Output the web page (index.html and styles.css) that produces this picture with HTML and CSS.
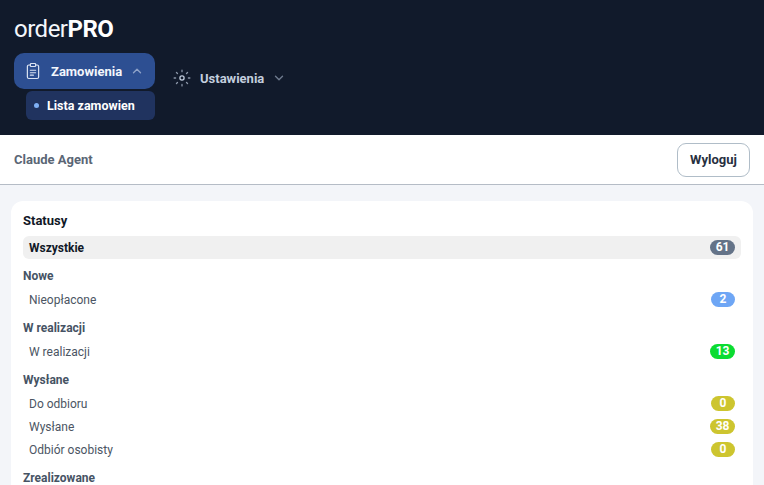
FILE: index.html
```html
<!DOCTYPE html>
<html lang="pl">
<head>
<meta charset="utf-8">
<title>orderPRO</title>
<link rel="stylesheet" href="styles.css">
</head>
<body>
<header class="sidebar">
  <div class="logo">order<strong>PRO</strong></div>
  <nav class="nav">
    <div class="nav-group">
      <a class="nav-item active">
        <svg class="icon" viewBox="0 0 24 24" fill="none" stroke="currentColor" stroke-width="1.600" stroke-linecap="round" stroke-linejoin="round"><path d="M8.500 4H6.500A2 2 0 0 0 4.500 6v14a2 2 0 0 0 2 2h11a2 2 0 0 0 2-2V6a2 2 0 0 0-2-2h-2"/><rect x="8.500" y="2" width="7" height="4" rx="1"/><path d="M8.500 11h7M8.500 14.300h7M8.500 17.600h4"/></svg>
        <span class="nav-label">Zamowienia</span>
        <svg class="chev" viewBox="0 0 12 12" fill="none" stroke="currentColor" stroke-width="1.400" stroke-linecap="round" stroke-linejoin="round"><path d="M2.500 7.800L6 4.300l3.500 3.500"/></svg>
      </a>
      <a class="sub-item"><span class="dot"></span>Lista zamowien</a>
    </div>
    <a class="nav-item plain">
      <svg class="icon" viewBox="0 0 24 24" fill="none" stroke="currentColor" stroke-linecap="round"><circle class="gear-ring" cx="12" cy="12" r="2.800" stroke-width="1.700"/><path class="gear-rays" stroke-width="1.700" d="M12 1.500v2M12 20.500v2M1.500 12h2M20.500 12h2M4.600 4.600l1.400 1.400M18 18l1.400 1.400M4.600 19.400L6 18M18 6l1.400-1.400"/></svg>
      <span class="nav-label">Ustawienia</span>
      <svg class="chev" viewBox="0 0 12 12" fill="none" stroke="currentColor" stroke-width="1.400" stroke-linecap="round" stroke-linejoin="round"><path d="M2.500 4.300L6 7.800l3.500-3.500"/></svg>
    </a>
  </nav>
</header>
<div class="topbar">
  <span class="user">Claude Agent</span>
  <button class="logout">Wyloguj</button>
</div>
<main class="content">
  <section class="card">
    <h2 class="card-title">Statusy</h2>
    <div class="row all"><span>Wszystkie</span><span class="badge slate">61</span></div>
    <h3 class="group">Nowe</h3>
    <div class="row"><span>Nieopłacone</span><span class="badge blue">2</span></div>
    <h3 class="group">W realizacji</h3>
    <div class="row"><span>W realizacji</span><span class="badge green">13</span></div>
    <h3 class="group">Wysłane</h3>
    <div class="row"><span>Do odbioru</span><span class="badge olive">0</span></div>
    <div class="row"><span>Wysłane</span><span class="badge olive">38</span></div>
    <div class="row"><span>Odbiór osobisty</span><span class="badge olive">0</span></div>
    <h3 class="group">Zrealizowane</h3>
  </section>
</main>
</body>
</html>
```
FILE: styles.css
```css
* { box-sizing: border-box; }
html, body { margin: 0; padding: 0; height: 485px; overflow: hidden; }
body { background: #f3f5f9; font-family: Roboto, "Liberation Sans", sans-serif; color: #111827; }

.sidebar { background: #111a2b; height: 135px; padding: 14px 14px 0; }
.logo { font-size: 24px; line-height: 30px; color: #f4f7fb; letter-spacing: -0.5px; }
.logo strong { font-weight: 700; color: #fff; }

.nav { display: flex; align-items: flex-start; margin-top: 9px; }
.nav-group { width: 141px; display: flex; flex-direction: column; gap: 2px; }
.nav-item { display: flex; align-items: center; font-size: 13px; font-weight: 700; height: 36px; }
.nav-item.active { background: #2d4f92; color: #f3f6fc; border-radius: 10px; padding: 0 12px 0 10px; }
.nav-item.plain { color: #c3cede; margin: 7px 0 0 14px; padding: 0 4px; }
.icon { width: 18px; height: 18px; flex: none; }
.active .icon { color: #dbe3f2; }
.gear-rays { stroke: #8b96a8; }
.gear-ring { stroke: #c3cede; }
.nav-label { margin-left: 9px; }
.chev { width: 12px; height: 12px; margin-left: 9px; flex: none; }
.active .chev { color: #8ea2c8; }
.plain .chev { color: #6f7b8e; }
.sub-item { display: flex; align-items: center; height: 29px; margin-left: 12px; padding-left: 8px; gap: 8px; border-radius: 6px; background: #20335f; color: #fff; font-size: 12.500px; font-weight: 700; }
.dot { width: 5px; height: 5px; border-radius: 50%; background: #7fb0f5; }

.topbar { height: 50px; background: #fff; border-bottom: 1px solid #b5bcc6; display: flex; align-items: center; justify-content: space-between; padding: 0 14px; }
.user { font-size: 13px; font-weight: 700; color: #5a6675; }
.logout { width: 73px; height: 34px; background: #fff; border: 1px solid #b0bdc8; border-radius: 9px; font: 700 13px Roboto, "Liberation Sans", sans-serif; color: #27303f; padding: 0; }

.content { padding: 16px 11px 0; }
.card { background: #fff; border-radius: 12px; padding: 12px; }
.card-title { margin: 0 0 8px; font-size: 13px; line-height: 15px; font-weight: 700; color: #111827; }
.group { margin: 10px 0 0; font-size: 12px; line-height: 15px; font-weight: 700; color: #465364; height: 19px; }
.row { display: flex; align-items: center; justify-content: space-between; height: 23px; padding: 0 6px; font-size: 12px; color: #4b5563; }
.row.all { background: #f0f0f0; border-radius: 6px; font-weight: 700; color: #111827; }
.badge { min-width: 24px; height: 15px; padding: 0 5.500px; border-radius: 8px; font-size: 12px; line-height: 15px; font-weight: 700; color: #fff; text-align: center; }
.slate { background: #647388; }
.blue { background: #6ea6f5; }
.green { background: #0bdc31; }
.olive { background: #cdc52f; }
```
